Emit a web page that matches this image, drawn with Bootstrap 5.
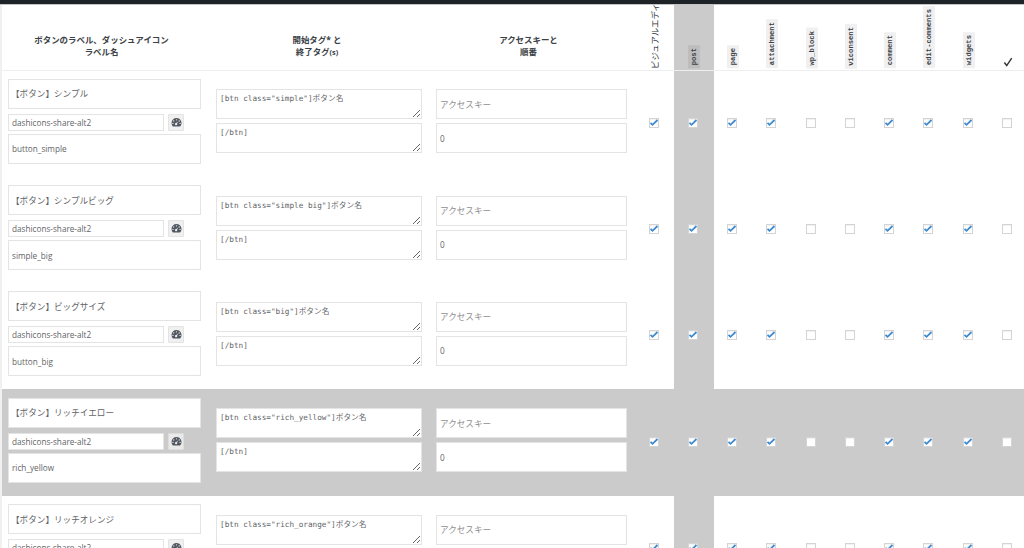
<!DOCTYPE html>
<html lang="ja"><head><meta charset="utf-8"><title>ボタン設定</title>
<link href="https://cdn.jsdelivr.net/npm/bootstrap@5.3.0/dist/css/bootstrap.min.css" rel="stylesheet">
<style>
html,body{height:548px;overflow:hidden;background:#f0f0f1}
body{font-family:"Open Sans","Noto Sans CJK JP",sans-serif;color:#5f6468;font-size:8.2px}
.topstrip{height:5px;background:#1d2327;border-bottom:1px solid #c3c4c7;position:relative;z-index:2}
.sheet{margin-left:2px;height:543px;overflow:hidden;background:#fff}
.qt{table-layout:fixed;width:1025.5px;margin:0;border-collapse:collapse;--bs-table-bg:transparent}
.qt th,.qt td{border:0;padding:0;background:transparent;box-shadow:none}
.qt thead th{height:65px;border-bottom:1px solid #eeeeef;vertical-align:middle;text-align:center;font-size:8.45px;font-weight:700;line-height:12px;color:#3c4146;padding-top:17px}
.qt thead th.hd1{padding-right:7px}
.qt thead th.hd2{padding-right:4px}
.qt thead th.hd3{padding-right:8px}
.qt tbody td{height:106.4px;vertical-align:middle;text-align:center}
.qt thead .vh{vertical-align:bottom;padding:0 0 1px;position:relative}
.vlabel{display:inline-block;writing-mode:vertical-rl;text-orientation:sideways;transform:rotate(180deg);white-space:nowrap}
.vtext{position:absolute;left:14px;bottom:1px;font-size:8.4px;font-weight:400;line-height:12px;color:#32373c}
.vcode{font-family:"Liberation Mono",monospace;font-size:7.2px;font-weight:700;line-height:12px;background:#f0f0f1;padding:3px 0;display:inline-block;vertical-align:bottom}
.postcol{background:#cbcbcb!important}
.postcol .vcode{background:#bdbdbd}
.hl td{background:#cbcbcb!important}
.qt td.cellL{padding:0 7px 4px 6px;text-align:left}
.qt td.cellM{padding:0 8px 4px;text-align:left}
.qt td.cellR{padding:0 8px 4px 6px;text-align:left}
.fld{display:block;width:100%;height:30px;padding:0 3px;border:1px solid #e4e4e4;border-radius:0;background:#fff;color:#5f6468;font-size:8.2px;line-height:1.2;font-family:"Open Sans","Noto Sans CJK JP",sans-serif;box-shadow:inset 0 0 1px rgba(0,0,0,.05)}
.fld::placeholder{color:#8f8f8f;opacity:1;font-size:8.6px}
.fld-title{padding-left:2px;margin-bottom:5px;font-size:8.6px}
.fld-small{height:17px;width:156px}
.fld-slug{margin-top:3px}
.fld-area{padding:3px;resize:vertical;font-family:"DejaVu Sans Mono","Noto Sans CJK JP",monospace;font-size:7.7px;line-height:11px}
.fld-gap{margin-bottom:4px}
.iconbtn{width:16px;height:17px;padding:0;border:1px solid #e4e4e4;border-radius:1px;background:#f0f0f1;display:flex;align-items:center;justify-content:center}
.hl .iconbtn{background:#e9e9e9;border-color:#dcdcdc}
.iconbtn svg{width:11px;height:11px}
.qt .fakecheck[type=checkbox]{width:10px;height:10px;margin:0 2px 2px 0;vertical-align:middle;border:1px solid #d4d4d4;border-radius:0;background-color:#fff;box-shadow:inset 0 1px 1px rgba(0,0,0,.06);float:none}
.qt .fakecheck[type=checkbox]:checked{background-color:#fff;border-color:#d4d4d4;background-image:url("data:image/svg+xml,%3Csvg xmlns='http://www.w3.org/2000/svg' viewBox='0 0 10 10'%3E%3Cpath d='M1.500 4.800l2 2L8.500 2' fill='none' stroke='%233f8bd0' stroke-width='1.800'/%3E%3C/svg%3E");background-size:10px 10px;background-position:center;background-repeat:no-repeat}
.tick{display:block;margin:0 auto 2px}
</style></head><body>
<div class="topstrip"></div>
<div class="sheet">
<table class="table qt">
<colgroup><col style="width:206px"><col style="width:222px"><col style="width:205px"><col span="10" style="width:39.25px"></colgroup>
<thead><tr>
<th class="hd1">ボタンのラベル、ダッシュアイコン<br>ラベル名</th>
<th class="hd2">開始タグ* と<br>終了タグ<small>(s)</small></th>
<th class="hd3">アクセスキーと<br>順番</th>
<th class="vh"><span class="vlabel vtext">ビジュアルエディタ</span></th>
<th class="vh postcol"><span class="vlabel vcode">post</span></th>
<th class="vh"><span class="vlabel vcode">page</span></th>
<th class="vh"><span class="vlabel vcode">attachment</span></th>
<th class="vh"><span class="vlabel vcode">wp_block</span></th>
<th class="vh"><span class="vlabel vcode">viconsent</span></th>
<th class="vh"><span class="vlabel vcode">comment</span></th>
<th class="vh"><span class="vlabel vcode">edit-comments</span></th>
<th class="vh"><span class="vlabel vcode">widgets</span></th>
<th class="vh"><svg class="tick" width="10" height="10" viewBox="0 0 11 11"><path d="M1.500 6l2.600 3.400L9.600 1.200" fill="none" stroke="#32373c" stroke-width="1.600"/></svg></th>
</tr></thead>
<tbody id="rows">
<tr>
<td class="cellL"><input class="fld fld-title" value="【ボタン】シンプル"><div class="d-flex gap-1 align-items-center"><input class="fld fld-small" value="dashicons-share-alt2"><button class="iconbtn" type="button"><svg viewBox="0 0 20 20"><path fill="#50575e" d="M10 2a9 9 0 0 0-9 9c0 2.400.9 4.600 2.500 6.200h13A9 9 0 0 0 10 2zm0 2a1.200 1.200 0 1 1 0 2.400A1.200 1.200 0 0 1 10 4zM5 6a1.200 1.200 0 1 1 0 2.400A1.200 1.200 0 0 1 5 6zm10 0a1.200 1.200 0 1 1 0 2.400A1.200 1.200 0 0 1 15 6zm-1.500 1.800L11 12a2 2 0 1 1-1.500-1l4-3.200zM3.500 10.500a1.200 1.200 0 1 1 0 2.400 1.200 1.200 0 0 1 0-2.400zm13 0a1.200 1.200 0 1 1 0 2.400 1.200 1.200 0 0 1 0-2.400z"/></svg></button></div><input class="fld fld-slug" value="button_simple"></td>
<td class="cellM"><textarea class="fld fld-area fld-gap">[btn class="simple"]ボタン名</textarea><textarea class="fld fld-area">[/btn]</textarea></td>
<td class="cellR"><input class="fld fld-gap" placeholder="アクセスキー"><input class="fld" value="0"></td>
<td><input class="form-check-input fakecheck" type="checkbox" checked></td><td class="postcol"><input class="form-check-input fakecheck" type="checkbox" checked></td><td><input class="form-check-input fakecheck" type="checkbox" checked></td><td><input class="form-check-input fakecheck" type="checkbox" checked></td><td><input class="form-check-input fakecheck" type="checkbox"></td><td><input class="form-check-input fakecheck" type="checkbox"></td><td><input class="form-check-input fakecheck" type="checkbox" checked></td><td><input class="form-check-input fakecheck" type="checkbox" checked></td><td><input class="form-check-input fakecheck" type="checkbox" checked></td><td><input class="form-check-input fakecheck" type="checkbox"></td>
</tr>
<tr>
<td class="cellL"><input class="fld fld-title" value="【ボタン】シンプルビッグ"><div class="d-flex gap-1 align-items-center"><input class="fld fld-small" value="dashicons-share-alt2"><button class="iconbtn" type="button"><svg viewBox="0 0 20 20"><path fill="#50575e" d="M10 2a9 9 0 0 0-9 9c0 2.400.9 4.600 2.500 6.200h13A9 9 0 0 0 10 2zm0 2a1.200 1.200 0 1 1 0 2.400A1.200 1.200 0 0 1 10 4zM5 6a1.200 1.200 0 1 1 0 2.400A1.200 1.200 0 0 1 5 6zm10 0a1.200 1.200 0 1 1 0 2.400A1.200 1.200 0 0 1 15 6zm-1.500 1.800L11 12a2 2 0 1 1-1.500-1l4-3.200zM3.500 10.500a1.200 1.200 0 1 1 0 2.400 1.200 1.200 0 0 1 0-2.400zm13 0a1.200 1.200 0 1 1 0 2.400 1.200 1.200 0 0 1 0-2.400z"/></svg></button></div><input class="fld fld-slug" value="simple_big"></td>
<td class="cellM"><textarea class="fld fld-area fld-gap">[btn class="simple big"]ボタン名</textarea><textarea class="fld fld-area">[/btn]</textarea></td>
<td class="cellR"><input class="fld fld-gap" placeholder="アクセスキー"><input class="fld" value="0"></td>
<td><input class="form-check-input fakecheck" type="checkbox" checked></td><td class="postcol"><input class="form-check-input fakecheck" type="checkbox" checked></td><td><input class="form-check-input fakecheck" type="checkbox" checked></td><td><input class="form-check-input fakecheck" type="checkbox" checked></td><td><input class="form-check-input fakecheck" type="checkbox"></td><td><input class="form-check-input fakecheck" type="checkbox"></td><td><input class="form-check-input fakecheck" type="checkbox" checked></td><td><input class="form-check-input fakecheck" type="checkbox" checked></td><td><input class="form-check-input fakecheck" type="checkbox" checked></td><td><input class="form-check-input fakecheck" type="checkbox"></td>
</tr>
<tr>
<td class="cellL"><input class="fld fld-title" value="【ボタン】ビッグサイズ"><div class="d-flex gap-1 align-items-center"><input class="fld fld-small" value="dashicons-share-alt2"><button class="iconbtn" type="button"><svg viewBox="0 0 20 20"><path fill="#50575e" d="M10 2a9 9 0 0 0-9 9c0 2.400.9 4.600 2.500 6.200h13A9 9 0 0 0 10 2zm0 2a1.200 1.200 0 1 1 0 2.400A1.200 1.200 0 0 1 10 4zM5 6a1.200 1.200 0 1 1 0 2.400A1.200 1.200 0 0 1 5 6zm10 0a1.200 1.200 0 1 1 0 2.400A1.200 1.200 0 0 1 15 6zm-1.500 1.800L11 12a2 2 0 1 1-1.500-1l4-3.200zM3.500 10.500a1.200 1.200 0 1 1 0 2.400 1.200 1.200 0 0 1 0-2.400zm13 0a1.200 1.200 0 1 1 0 2.400 1.200 1.200 0 0 1 0-2.400z"/></svg></button></div><input class="fld fld-slug" value="button_big"></td>
<td class="cellM"><textarea class="fld fld-area fld-gap">[btn class="big"]ボタン名</textarea><textarea class="fld fld-area">[/btn]</textarea></td>
<td class="cellR"><input class="fld fld-gap" placeholder="アクセスキー"><input class="fld" value="0"></td>
<td><input class="form-check-input fakecheck" type="checkbox" checked></td><td class="postcol"><input class="form-check-input fakecheck" type="checkbox" checked></td><td><input class="form-check-input fakecheck" type="checkbox" checked></td><td><input class="form-check-input fakecheck" type="checkbox" checked></td><td><input class="form-check-input fakecheck" type="checkbox"></td><td><input class="form-check-input fakecheck" type="checkbox"></td><td><input class="form-check-input fakecheck" type="checkbox" checked></td><td><input class="form-check-input fakecheck" type="checkbox" checked></td><td><input class="form-check-input fakecheck" type="checkbox" checked></td><td><input class="form-check-input fakecheck" type="checkbox"></td>
</tr>
<tr class="hl">
<td class="cellL"><input class="fld fld-title" value="【ボタン】リッチイエロー"><div class="d-flex gap-1 align-items-center"><input class="fld fld-small" value="dashicons-share-alt2"><button class="iconbtn" type="button"><svg viewBox="0 0 20 20"><path fill="#50575e" d="M10 2a9 9 0 0 0-9 9c0 2.400.9 4.600 2.500 6.200h13A9 9 0 0 0 10 2zm0 2a1.200 1.200 0 1 1 0 2.400A1.200 1.200 0 0 1 10 4zM5 6a1.200 1.200 0 1 1 0 2.400A1.200 1.200 0 0 1 5 6zm10 0a1.200 1.200 0 1 1 0 2.400A1.200 1.200 0 0 1 15 6zm-1.500 1.800L11 12a2 2 0 1 1-1.500-1l4-3.200zM3.500 10.500a1.200 1.200 0 1 1 0 2.400 1.200 1.200 0 0 1 0-2.400zm13 0a1.200 1.200 0 1 1 0 2.400 1.200 1.200 0 0 1 0-2.400z"/></svg></button></div><input class="fld fld-slug" value="rich_yellow"></td>
<td class="cellM"><textarea class="fld fld-area fld-gap">[btn class="rich_yellow"]ボタン名</textarea><textarea class="fld fld-area">[/btn]</textarea></td>
<td class="cellR"><input class="fld fld-gap" placeholder="アクセスキー"><input class="fld" value="0"></td>
<td><input class="form-check-input fakecheck" type="checkbox" checked></td><td class="postcol"><input class="form-check-input fakecheck" type="checkbox" checked></td><td><input class="form-check-input fakecheck" type="checkbox" checked></td><td><input class="form-check-input fakecheck" type="checkbox" checked></td><td><input class="form-check-input fakecheck" type="checkbox"></td><td><input class="form-check-input fakecheck" type="checkbox"></td><td><input class="form-check-input fakecheck" type="checkbox" checked></td><td><input class="form-check-input fakecheck" type="checkbox" checked></td><td><input class="form-check-input fakecheck" type="checkbox" checked></td><td><input class="form-check-input fakecheck" type="checkbox"></td>
</tr>
<tr>
<td class="cellL"><input class="fld fld-title" value="【ボタン】リッチオレンジ"><div class="d-flex gap-1 align-items-center"><input class="fld fld-small" value="dashicons-share-alt2"><button class="iconbtn" type="button"><svg viewBox="0 0 20 20"><path fill="#50575e" d="M10 2a9 9 0 0 0-9 9c0 2.400.9 4.600 2.500 6.200h13A9 9 0 0 0 10 2zm0 2a1.200 1.200 0 1 1 0 2.400A1.200 1.200 0 0 1 10 4zM5 6a1.200 1.200 0 1 1 0 2.400A1.200 1.200 0 0 1 5 6zm10 0a1.200 1.200 0 1 1 0 2.400A1.200 1.200 0 0 1 15 6zm-1.500 1.800L11 12a2 2 0 1 1-1.500-1l4-3.200zM3.500 10.500a1.200 1.200 0 1 1 0 2.400 1.200 1.200 0 0 1 0-2.400zm13 0a1.200 1.200 0 1 1 0 2.400 1.200 1.200 0 0 1 0-2.400z"/></svg></button></div><input class="fld fld-slug" value="rich_orange"></td>
<td class="cellM"><textarea class="fld fld-area fld-gap">[btn class="rich_orange"]ボタン名</textarea><textarea class="fld fld-area">[/btn]</textarea></td>
<td class="cellR"><input class="fld fld-gap" placeholder="アクセスキー"><input class="fld" value="0"></td>
<td><input class="form-check-input fakecheck" type="checkbox" checked></td><td class="postcol"><input class="form-check-input fakecheck" type="checkbox" checked></td><td><input class="form-check-input fakecheck" type="checkbox" checked></td><td><input class="form-check-input fakecheck" type="checkbox" checked></td><td><input class="form-check-input fakecheck" type="checkbox"></td><td><input class="form-check-input fakecheck" type="checkbox"></td><td><input class="form-check-input fakecheck" type="checkbox" checked></td><td><input class="form-check-input fakecheck" type="checkbox" checked></td><td><input class="form-check-input fakecheck" type="checkbox" checked></td><td><input class="form-check-input fakecheck" type="checkbox"></td>
</tr>
</tbody></table>
</div>
<script src="https://cdn.jsdelivr.net/npm/bootstrap@5.3.0/dist/js/bootstrap.bundle.min.js"></script>
</body></html>
